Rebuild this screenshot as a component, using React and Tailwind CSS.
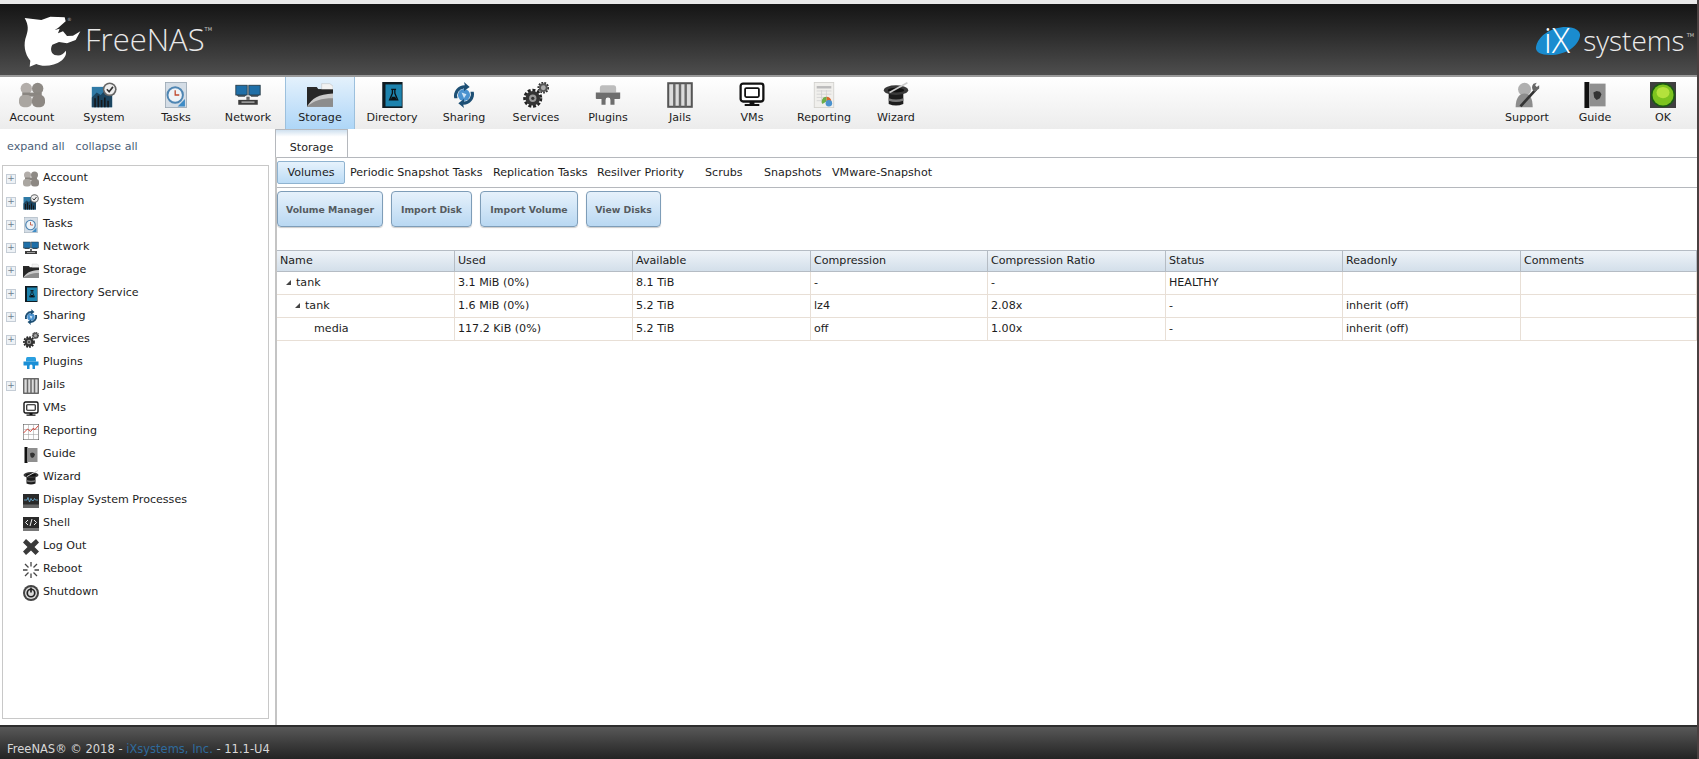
import React from 'react'

const font = 'font-["DejaVu_Sans",Verdana,sans-serif]'

// small drawn icons, shared between the toolbar and the tree
const Icon = ({ name, size = 16 }) => {
  const s = { width: size, height: size }
  switch (name) {
    case 'account':
      return (
        <svg viewBox="0 0 32 32" style={s}>
          <circle cx="9" cy="8" r="7" fill="#b3aeaa" />
          <circle cx="23" cy="8" r="7" fill="#8e8a85" />
          <rect x="4" y="13" width="24" height="5" fill="#8a8681" />
          <rect x="0" y="16" width="16" height="15" rx="6" fill="#aaa6a1" />
          <rect x="16" y="16" width="16" height="15" rx="6" fill="#8d8883" />
        </svg>
      )
    case 'system':
      return (
        <svg viewBox="0 0 32 32" style={s}>
          <rect x="1" y="6" width="25" height="25" fill="#2f7aa6" />
          <path d="M1 19l6-6 5 3 6-7 8 4v18H1z" fill="#1c4560" />
          <path d="M4 31V20h2v11zM8 31V17h2v14zM12 31V22h2v9zM16 31V19h2v12zM20 31V23h2v8z" fill="#14181c" />
          <circle cx="23" cy="9" r="8.5" fill="#666" />
          <circle cx="23" cy="9" r="6.5" fill="#eee" />
          <path d="M19.5 9l2.8 3L27 6" fill="none" stroke="#333" strokeWidth="2" />
        </svg>
      )
    case 'tasks':
      return (
        <svg viewBox="0 0 32 32" style={s}>
          <rect x="3" y="0.5" width="26" height="31" fill="#d4dde6" stroke="#9aa7b3" />
          <circle cx="15" cy="16" r="9.5" fill="#eef3f8" stroke="#4f86b3" strokeWidth="2.4" />
          <path d="M15 10v6h5" fill="none" stroke="#c0492f" strokeWidth="1.6" />
          <path d="M18 30l9-9v9z" fill="#3f8cc6" />
        </svg>
      )
    case 'network':
      return (
        <svg viewBox="0 0 32 32" style={s}>
          <rect x="1" y="4" width="14" height="12" fill="#1f6fa8" stroke="#23343f" />
          <rect x="17" y="4" width="14" height="12" fill="#1f6fa8" stroke="#23343f" />
          <path d="M2 16h12l-2 2H4zM18 16h12l-2 2h-8z" fill="#3b4a54" />
          <rect x="14" y="18" width="4" height="4" fill="#666" />
          <rect x="4" y="22" width="24" height="6" fill="#3c3c3c" />
          <rect x="8" y="24" width="16" height="1.5" fill="#bbb" />
        </svg>
      )
    case 'storage':
      return (
        <svg viewBox="0 0 32 32" style={s}>
          <path d="M0 6h12l2 3h18v21H0z" fill="#2b2b2b" />
          <path d="M18 2h10l4 3v5H18z" fill="#f2f2f2" stroke="#bbb" strokeWidth=".6" />
          <rect x="0" y="9" width="32" height="21" fill="#262626" />
          <path d="M0 30c6-10 14-15 32-16v16z" fill="#c9c9c9" />
          <path d="M0 30c9-7 17-10 32-10v10z" fill="#8c8c8c" />
        </svg>
      )
    case 'directory':
      return (
        <svg viewBox="0 0 32 32" style={s}>
          <rect x="4" y="0" width="25" height="32" fill="#0f1b22" />
          <rect x="8" y="3" width="20" height="27" fill="#1d83ae" />
          <path d="M15 9h6M16.5 9v5l-3.5 8h10l-3.5-8V9" fill="none" stroke="#0b1014" strokeWidth="1.6" />
          <path d="M14 22l2-4h4l2 4z" fill="#0b1014" />
        </svg>
      )
    case 'sharing':
      return (
        <svg viewBox="0 0 32 32" style={s}>
          <circle cx="16" cy="16" r="7.5" fill="#4a92cf" />
          <path d="M13 13l6 2-3 5z" fill="#cfe4f5" />
          <path d="M4 20A13 13 0 0 1 17 4l-1-4 7 6-7 5 0-3A9 9 0 0 0 8 20z" fill="#1d4f74" />
          <path d="M28 12A13 13 0 0 1 15 28l1 4-7-6 7-5 0 3a9 9 0 0 0 8-12z" fill="#1d4f74" />
        </svg>
      )
    case 'services':
      return (
        <svg viewBox="0 0 32 32" style={s}>
          <circle cx="12" cy="20" r="10" fill="none" stroke="#222" strokeWidth="3.5" strokeDasharray="3.6 2.2" />
          <circle cx="12" cy="20" r="9" fill="#333" />
          <circle cx="12" cy="20" r="4.5" fill="#999" />
          <circle cx="12" cy="20" r="2" fill="#333" />
          <circle cx="25" cy="7" r="6" fill="none" stroke="#333" strokeWidth="2.4" strokeDasharray="2.2 1.4" />
          <circle cx="25" cy="7" r="5.4" fill="#555" />
          <circle cx="25" cy="7" r="3" fill="#aaa" />
        </svg>
      )
    case 'plugins':
      return (
        <svg viewBox="0 0 32 32" style={s}>
          <path d="M9 4h14q3 0 3 4v5H6V8q0-4 3-4z" fill="#bdbdbd" />
          <path d="M1 13h30v7q0 1-1 1h-6v7h-5v-6q0-3-3-3t-3 3v6H8v-7H2q-1 0-1-1z" fill="#6e6e6e" />
        </svg>
      )
    case 'plugins-blue':
      return (
        <svg viewBox="0 0 32 32" style={s}>
          <path d="M9 4h14q3 0 3 4v5H6V8q0-4 3-4z" fill="#2a9fe0" />
          <path d="M1 13h30v7q0 1-1 1h-6v7h-5v-6q0-3-3-3t-3 3v6H8v-7H2q-1 0-1-1z" fill="#1b8fd6" />
        </svg>
      )
    case 'jails':
      return (
        <svg viewBox="0 0 32 32" style={s}>
          <rect x="1.5" y="1.5" width="29" height="29" fill="#dcdcdc" stroke="#555" strokeWidth="2.5" />
          <path d="M9 2v28M16 2v28M23 2v28" stroke="#6a6a6a" strokeWidth="3" />
        </svg>
      )
    case 'vms':
      return (
        <svg viewBox="0 0 32 32" style={s}>
          <rect x="2" y="2" width="28" height="22" rx="3" fill="#fff" stroke="#111" strokeWidth="2.8" />
          <rect x="7.5" y="7.5" width="17" height="11" rx="1.5" fill="none" stroke="#111" strokeWidth="2.2" />
          <path d="M13 24h6v3h-6zM7 27h18v2.5H7z" fill="#111" />
        </svg>
      )
    case 'reporting':
      return (
        <svg viewBox="0 0 32 32" style={s}>
          <rect x="4" y="0.5" width="24" height="31" fill="#f0efec" stroke="#d0cfcb" />
          <rect x="7" y="5" width="18" height="3" fill="#bbb" />
          <path d="M7 11h18M7 15h18M7 19h12M7 23h10M13 10v16M19 10v10" stroke="#d0d0d0" />
          <path d="M25 24a6 6 0 0 0-6-6v6z" fill="#d9682f" />
          <path d="M19 18a6 6 0 0 0-5 9l5-3z" fill="#6cae4a" />
          <circle cx="22" cy="26" r="4" fill="#4a92cf" />
        </svg>
      )
    case 'chart':
      return (
        <svg viewBox="0 0 32 32" style={s}>
          <rect x="0.5" y="0.5" width="31" height="31" fill="#fff" stroke="#444" />
          <path d="M1 11h30M1 21h30M11 1v30M21 1v30" stroke="#999" />
          <path d="M1 18l8-8 6 5 6-7 2 4 8-9" fill="none" stroke="#d0453a" strokeWidth="2" />
        </svg>
      )
    case 'wizard':
      return (
        <svg viewBox="0 0 32 32" style={s}>
          <path d="M7 10h18v17q-9 4-18 0z" fill="#1c1c1c" />
          <path d="M7 20q9 3 18 0v3q-9 3-18 0z" fill="#777" />
          <ellipse cx="16" cy="10" rx="15" ry="6" fill="#3a3a3a" />
          <ellipse cx="16" cy="10" rx="10" ry="3" fill="#111" />
          <path d="M8 13L30 1" stroke="#ccc" strokeWidth="2" />
        </svg>
      )
    case 'guide':
      return (
        <svg viewBox="0 0 32 32" style={s}>
          <rect x="3" y="0" width="6" height="32" fill="#111" />
          <rect x="9" y="2" width="20" height="28" fill="#8f8f8f" />
          <path d="M14 13l4-2 4 1 2 3-2 5-4 2-3-3z" fill="#333" />
        </svg>
      )
    case 'support':
      return (
        <svg viewBox="0 0 32 32" style={s}>
          <circle cx="13" cy="9" r="8" fill="#b0b0b0" />
          <path d="M2 31c0-12 5-17 11-17s10 5 10 17z" fill="#8d8d8d" />
          <path d="M8 30L27 9" stroke="#333" strokeWidth="3.4" />
          <path d="M24 2a6.5 6.5 0 0 0 0 9l2 1 5-4V4l-3 2-2-2 2-3z" fill="#666" />
        </svg>
      )
    case 'ok':
      return (
        <svg viewBox="0 0 32 32" style={s}>
          <rect width="32" height="32" fill="#3f3f3f" />
          <circle cx="16" cy="16" r="15" fill="#1c5a14" />
          <circle cx="16" cy="16" r="13" fill="#7dc41f" />
          <ellipse cx="16" cy="13" rx="8" ry="7" fill="#b4e23c" />
        </svg>
      )
    case 'processes':
      return (
        <svg viewBox="0 0 32 32" style={s}>
          <rect x="0" y="2" width="32" height="28" fill="#2a2a2a" />
          <rect x="0" y="23" width="32" height="7" fill="#666" />
          <path d="M2 14h6l2-5 3 9 3-7 2 4h3l2-4 2 3h5" fill="none" stroke="#6fb3d9" strokeWidth="1.6" />
        </svg>
      )
    case 'shell':
      return (
        <svg viewBox="0 0 32 32" style={s}>
          <rect x="0" y="2" width="32" height="28" fill="#2a2a2a" />
          <rect x="0" y="24" width="32" height="6" fill="#777" />
          <path d="M10 8l-5 5 5 5M22 8l5 5-5 5M18 6l-4 14" fill="none" stroke="#eee" strokeWidth="2" />
        </svg>
      )
    case 'logout':
      return (
        <svg viewBox="0 0 32 32" style={s}>
          <path d="M6 0l10 9 10-9 6 7-9 9 9 9-7 7-9-9-10 9-6-7 9-9-9-9z" fill="#3a3a3a" />
        </svg>
      )
    case 'reboot':
      return (
        <svg viewBox="0 0 32 32" style={s}>
          <path d="M16 0v9M16 23v9M0 16h9M23 16h9M4 4l7 7M21 21l7 7M4 28l7-7M21 11l7-7" stroke="#444" strokeWidth="2.6" />
        </svg>
      )
    case 'shutdown':
      return (
        <svg viewBox="0 0 32 32" style={s}>
          <circle cx="16" cy="16" r="16" fill="#444" />
          <circle cx="16" cy="16" r="12" fill="#ddd" />
          <circle cx="16" cy="16" r="7.5" fill="none" stroke="#222" strokeWidth="3.4" />
          <path d="M16 5v10" stroke="#222" strokeWidth="3.4" />
        </svg>
      )
    default:
      return null
  }
}

const toolbarLeft = [
  ['Account', 'account'],
  ['System', 'system'],
  ['Tasks', 'tasks'],
  ['Network', 'network'],
  ['Storage', 'storage'],
  ['Directory', 'directory'],
  ['Sharing', 'sharing'],
  ['Services', 'services'],
  ['Plugins', 'plugins'],
  ['Jails', 'jails'],
  ['VMs', 'vms'],
  ['Reporting', 'reporting'],
  ['Wizard', 'wizard'],
]

const toolbarRight = [
  ['Support', 'support'],
  ['Guide', 'guide'],
  ['OK', 'ok'],
]

const tree = [
  ['Account', 'account', true],
  ['System', 'system', true],
  ['Tasks', 'tasks', true],
  ['Network', 'network', true],
  ['Storage', 'storage', true],
  ['Directory Service', 'directory', true],
  ['Sharing', 'sharing', true],
  ['Services', 'services', true],
  ['Plugins', 'plugins-blue', false],
  ['Jails', 'jails', true],
  ['VMs', 'vms', false],
  ['Reporting', 'chart', false],
  ['Guide', 'guide', false],
  ['Wizard', 'wizard', false],
  ['Display System Processes', 'processes', false],
  ['Shell', 'shell', false],
  ['Log Out', 'logout', false],
  ['Reboot', 'reboot', false],
  ['Shutdown', 'shutdown', false],
]

const buttons = [
  ['Volume Manager', 'w-[106px]'],
  ['Import Disk', 'w-[81px]'],
  ['Import Volume', 'w-[98px]'],
  ['View Disks', 'w-[75px]'],
]
const columns = ['Name', 'Used', 'Available', 'Compression', 'Compression Ratio', 'Status', 'Readonly', 'Comments']
const rows = [
  ['tank', 0, '3.1 MiB (0%)', '8.1 TiB', '-', '-', 'HEALTHY', ''],
  ['tank', 1, '1.6 MiB (0%)', '5.2 TiB', 'lz4', '2.08x', '-', 'inherit (off)'],
  ['media', 2, '117.2 KiB (0%)', '5.2 TiB', 'off', '1.00x', '-', 'inherit (off)'],
]

const Arrow = () => <span className="w-0 h-0 border-l-[5px] border-l-transparent border-b-[5px] border-b-[#444] mr-[5px]" />

const App = () => (
  <div className={`${font} w-[1699px] h-[759px] overflow-hidden flex bg-white text-[11.1px] text-[#1c1c1c]`}>
    <div className="w-[1697px] h-full flex flex-col">
      <div className="h-1 bg-[#e8e8e8]" />
      <header className="h-[73px] shrink-0 flex items-center justify-between bg-gradient-to-b from-[#151515] to-[#4e4e4e] border-b-2 border-[#9a9a9a]">
        <div className="flex items-start ml-[23px] mt-[3px]">
          <svg viewBox="40 20 180 165" className="w-[60px] h-[55px]">
            <path
              d="M45 32L95 38L122 28L165 30L168 42L145 62L135 68L150 64L145 78L160 72L172 86L190 85L212 72L198 98L172 108L148 104L128 112C120 125 125 142 140 144C152 146 162 140 168 130C172 140 165 152 155 160C135 175 100 180 80 170L60 178L62 160C45 140 40 110 50 85C55 70 58 55 45 32Z"
              fill="#fff"
            />
            <text x="172" y="40" fontSize="14" fill="#bbb">®</text>
          </svg>
          <span className="font-['Open_Sans',sans-serif] font-light text-[31px] leading-none text-[#e8e8e8] mt-[10px] ml-[2px]">FreeNAS</span>
          <span className="text-[5px] text-[#ccc] mt-[12px]">TM</span>
        </div>
        <div className="flex items-center mr-[3px]">
          <svg viewBox="0 -8 46 52" className="w-[46px] h-[52px] -my-[8px]">
            <path d="M1 25C3 14 16 5 31 5C40 5 46 9 45 14C43 25 30 33 15 33C6 33 0 30 1 25Z" fill="#1a8ccf" />
            <text x="9" y="31" fontSize="34" fontWeight="300" fontFamily="Open Sans, sans-serif" fill="#fff">iX</text>
          </svg>
          <span className="font-['Open_Sans',sans-serif] font-light text-[28px] leading-none text-[#ececec] ml-[2px]">systems</span>
          <span className="text-[5px] text-[#ccc] self-start mt-[10px] ml-[2px]">TM</span>
        </div>
      </header>

      <nav className="h-[52px] shrink-0 flex justify-between bg-gradient-to-b from-white to-[#ececec]">
        <div className="flex -ml-1">
          {toolbarLeft.map(([label, icon]) => (
            <div key={label} className="w-[72px] flex justify-center">
              <div className={`w-[70px] flex flex-col items-center pt-[5px] ${label === 'Storage' ? 'bg-gradient-to-b from-[#e4f1fc] to-[#aed6f7] border-x border-[#9cc0dd]' : ''}`}>
                <Icon name={icon} size={26} />
                <span className="mt-[3px] leading-[14px]">{label}</span>
              </div>
            </div>
          ))}
        </div>
        <div className="flex">
          {toolbarRight.map(([label, icon]) => (
            <div key={label} className="w-[68px] flex flex-col items-center pt-[5px]">
              <Icon name={icon} size={26} />
              <span className="mt-[3px] leading-[14px]">{label}</span>
            </div>
          ))}
        </div>
      </nav>

      <main className="flex-1 flex min-h-0">
        <aside className="w-[275px] shrink-0 flex flex-col pl-[2px] pr-[6px] pb-[6px]">
          <div className="h-[36px] shrink-0 flex items-center gap-[11px] pl-[5px] pt-[1px] text-[#4a6078]">
            <span>expand all</span>
            <span>collapse all</span>
          </div>
          <ul className="flex-1 border border-[#c8c8c8] pt-[1px]">
            {tree.map(([label, icon, expandable]) => (
              <li key={label} className="h-[23px] flex items-center">
                <span className="w-[16px] mr-[4px] flex justify-center">
                  {expandable && (
                    <span className="w-[10px] h-[10px] border border-[#c5cdd6] bg-[#eef2f6] flex items-center justify-center text-[9px] leading-none text-[#6d7f90]">+</span>
                  )}
                </span>
                <Icon name={icon} size={16} />
                <span className="ml-[4px]">{label}</span>
              </li>
            ))}
          </ul>
        </aside>

        <section className="flex-1 min-w-0 border-l-2 border-[#c4c4c4] flex flex-col">
          <div className="h-[29px] shrink-0 border-b border-[#b5b8bd] flex items-end">
            <div className="w-[73px] -ml-[2px] h-[28px] pt-[9px] border border-b-0 border-[#b5b8bd] bg-gradient-to-b from-[#cfe0ef] to-white to-[25%] flex items-center justify-center">Storage</div>
          </div>
          <div className="h-[30px] shrink-0 border-b border-[#b5b8bd] flex items-center">
            <div className="w-[68px] h-[23px] pt-[2px] flex items-center justify-center border border-[#8fb3d0] rounded-[2px] bg-gradient-to-b from-[#e6f2fc] to-[#bcdcf6]">Volumes</div>
            <div className="flex ml-[5px] pt-[2px]">
              <span className="w-[143px]">Periodic Snapshot Tasks</span>
              <span className="w-[104px]">Replication Tasks</span>
              <span className="w-[108px]">Resilver Priority</span>
              <span className="w-[59px]">Scrubs</span>
              <span className="w-[68px]">Snapshots</span>
              <span>VMware-Snapshot</span>
            </div>
          </div>
          <div className="h-[62px] shrink-0 flex items-start pt-[3px] gap-[8px]">
            {buttons.map(([label, w]) => (
              <button
                key={label}
                className={`${w} h-[36px] pt-[2px] border border-[#7e9db8] rounded-[4px] bg-gradient-to-b from-[#e6f1fb] to-[#b9d8f2] shadow-[0_1px_1px_rgba(0,0,0,0.2)] font-bold text-[9.3px] text-[#555b60]`}
              >
                {label}
              </button>
            ))}
          </div>
          <div className="grid grid-cols-[178px_178px_178px_177px_178px_177px_178px_1fr]">
            {columns.map((c) => (
              <div key={c} className="h-[22px] flex items-center pl-[3px] border-r border-y border-[#b5bcc4] bg-gradient-to-b from-[#eef3f8] to-[#d3dfea]">{c}</div>
            ))}
            {rows.map((r, i) =>
              [0, 2, 3, 4, 5, 6, 7, 8].map((j) => (
                <div key={`${i}-${j}`} className="h-[23px] flex items-center pl-[3px] border-r border-b border-[#e8dfd6]">
                  {j === 0 ? (
                    <span className={`flex items-center ${r[1] === 0 ? 'pl-[6px]' : r[1] === 1 ? 'pl-[15px]' : 'pl-[34px]'}`}>
                      {r[1] < 2 && <Arrow />}
                      {r[0]}
                    </span>
                  ) : (
                    r[j]
                  )}
                </div>
              ))
            )}
          </div>
        </section>
      </main>

      <footer className="h-[34px] shrink-0 flex items-end pb-[1px] pl-[7px] border-t-2 border-[#2e2e2e] bg-gradient-to-b from-[#585858] to-[#242424] text-[11.5px] leading-[18px] text-[#d8d8d8]">
        <span>FreeNAS® © 2018 - <span className="text-[#2f6a9c]">iXsystems, Inc.</span> - 11.1-U4</span>
      </footer>
    </div>
    <div className="w-[2px] h-full bg-[#4a4040]" />
  </div>
)

export default App
